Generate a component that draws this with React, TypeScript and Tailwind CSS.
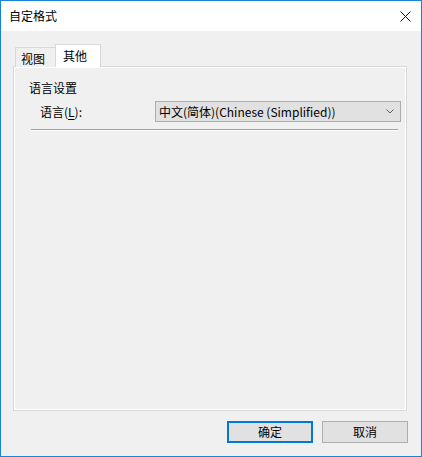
const font = { fontFamily: '"Noto Sans CJK SC", "Microsoft YaHei", sans-serif' }

function CloseIcon() {
  return (
    <svg width="11" height="11" viewBox="0 0 11 11" fill="none">
      <path d="M0.5 0.5l10 10M10.5 0.5l-10 10" stroke="#111" strokeWidth="1" />
    </svg>
  )
}

function Chevron() {
  return (
    <svg width="8" height="5" viewBox="0 0 8 5" fill="none">
      <path d="M0.5 0.5l3.5 3.5 3.5-3.5" stroke="#606060" strokeWidth="1" />
    </svg>
  )
}

export default function App() {
  return (
    <div
      className="w-[422px] h-[457px] border border-[#1883d7] bg-[#f0f0f0] flex flex-col text-[12px] text-black"
      style={font}
    >
      {/* Title bar */}
      <div className="h-[30px] bg-white flex items-center justify-between pl-[8px] pr-[10px] shrink-0">
        <span className="leading-none">自定格式</span>
        <CloseIcon />
      </div>

      {/* Body */}
      <div className="flex-1 flex flex-col pl-[12px] pr-[14px] pt-[13px]">
        {/* Tabs */}
        <div className="flex items-end pl-[2px] h-[23px] relative z-10">
          <div className="h-[20px] w-[41px] border border-b-0 border-[#d9d9d9] bg-[#f0f0f0] flex items-center pl-[5px] leading-none pt-[2px]">
            视图
          </div>
          <div className="h-[23px] w-[46px] -ml-px border border-b-0 border-[#d9d9d9] bg-white flex items-center pl-[7px] leading-none">
            其他
          </div>
        </div>

        {/* Panel */}
        <div className="flex-1 -mt-px border border-[#d9d9d9]">
          <div className="h-full border border-white flex flex-col pl-[14px] pr-[4px]">
            <div className="mt-[12px] leading-[16px]">语言设置</div>
            <div className="flex items-center mt-[5px]">
              <span className="w-[126px] shrink-0 pl-[11px] leading-none">
                语言(<span className="underline underline-offset-2">L</span>):
              </span>
              <div className="w-[246px] shrink-0 h-[21px] border border-[#adadad] bg-[#e1e1e1] flex items-center justify-between pl-[3px] pr-[6px]">
                <span className="leading-none">中文(简体)(Chinese (Simplified))</span>
                <Chevron />
              </div>
            </div>
            <div className="mt-[7px] ml-[2px] mr-[3px] border-t border-[#a0a0a0] border-b border-b-white" />
          </div>
        </div>

        {/* Buttons */}
        <div className="flex justify-end gap-[9px] mt-[10px] mb-[13px] mr-[-1px]">
          <button className="w-[86px] h-[22px] border-2 border-[#0078d7] bg-[#e1e1e1] leading-none">
            确定
          </button>
          <button className="w-[86px] h-[22px] border border-[#adadad] bg-[#e1e1e1] leading-none">
            取消
          </button>
        </div>
      </div>
    </div>
  )
}
